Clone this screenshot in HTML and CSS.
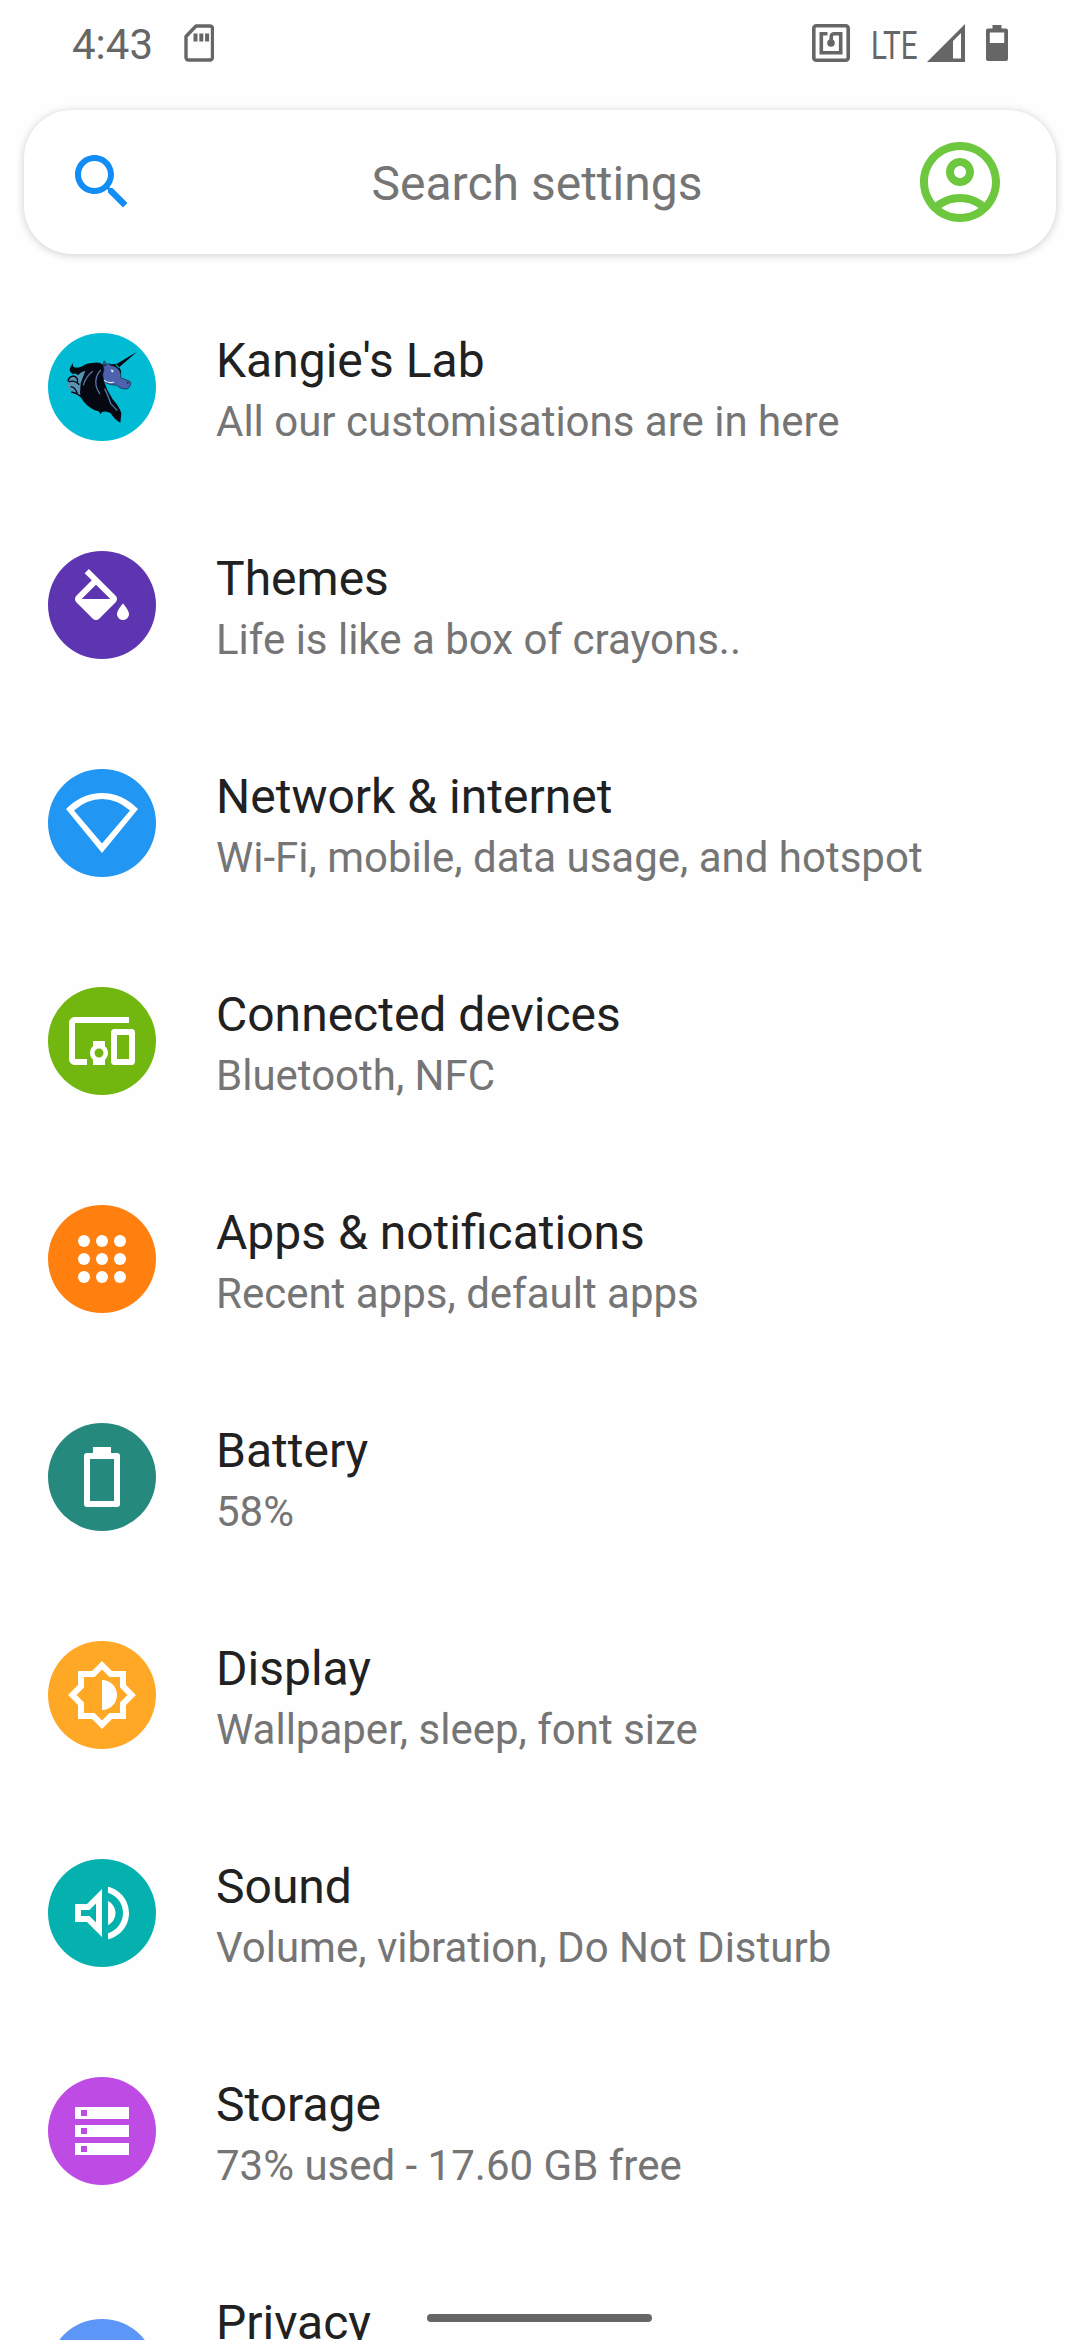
FILE: index.html
```html
<!DOCTYPE html>
<html lang="en">
<head>
<meta charset="utf-8">
<title>Settings</title>
<link rel="stylesheet" href="styles.css">
</head>
<body>
<header class="status">
  <span class="clock">4:43</span>
  <svg class="sd" viewBox="0 0 30 38"><path d="M12 2H26a2.500 2.500 0 0 1 2.500 2.500V33.500a2.500 2.500 0 0 1-2.500 2.500H4.500a2.500 2.500 0 0 1-2.500-2.500V12.500Z" fill="none" stroke="#666" stroke-width="3.400" stroke-linejoin="round"/><path d="M9.500 9.500h4v8h-4zm5.800 0h4v8h-4zm5.800 0h4v8h-4z" fill="#666"/></svg>
  <span class="spacer"></span>
  <svg class="nfc" viewBox="0 0 38 38"><rect x="1.800" y="1.800" width="34.400" height="34.400" rx="2.500" fill="none" stroke="#666" stroke-width="3.600"/><path d="M15.500 9.800H9.300V28.700H28.700V9.800H22.500Q19.200 9.800 19.200 13V19" fill="none" stroke="#666" stroke-width="3.600"/><circle cx="19" cy="19" r="3.800" fill="#666"/></svg>
  <span class="lte">LTE</span>
  <svg class="signal" viewBox="0 0 38 38"><path fill-rule="evenodd" d="M0 38L38 0V38ZM26 34.500H34V9L26 17Z" fill="#666"/></svg>
  <svg class="battery" viewBox="0 0 22 36"><path fill-rule="evenodd" d="M6.500 0h9v3.500H20a2 2 0 0 1 2 2V34a2 2 0 0 1-2 2H2a2 2 0 0 1-2-2V5.500a2 2 0 0 1 2-2H6.500ZM3.800 7.500V18H18.200V7.500Z" fill="#666"/></svg>
</header>

<div class="search">
  <svg class="glass" viewBox="0 0 24 24"><path fill="#118df5" d="M15.500 14h-.79l-.28-.27C15.410 12.590 16 11.110 16 9.500 16 5.910 13.090 3 9.500 3S3 5.910 3 9.500 5.910 16 9.500 16c1.610 0 3.090-.59 4.230-1.570l.27.28v.79l5 4.990L20.490 19l-4.990-5zm-6 0C7.010 14 5 11.990 5 9.500S7.010 5 9.500 5 14 7.010 14 9.500 11.990 14 9.500 14z"/></svg>
  <span class="hint">Search settings</span>
  <svg class="avatar" viewBox="0 0 24 24"><path fill="#6dc840" d="M12 2C6.480 2 2 6.480 2 12s4.480 10 10 10 10-4.480 10-10S17.520 2 12 2zM7.350 18.500C8.660 17.560 10.260 17 12 17s3.340.56 4.650 1.500C15.340 19.440 13.740 20 12 20s-3.340-.56-4.650-1.500zm10.790-1.380C16.450 15.800 14.320 15 12 15s-4.450.8-6.140 2.120C4.700 15.730 4 13.950 4 12c0-4.420 3.580-8 8-8s8 3.580 8 8c0 1.950-.7 3.730-1.860 5.120zM12 6c-1.930 0-3.500 1.570-3.500 3.500S10.070 13 12 13s3.500-1.570 3.500-3.500S13.930 6 12 6zm0 5c-.83 0-1.500-.67-1.500-1.500S11.170 8 12 8s1.500.67 1.500 1.500S12.830 11 12 11z"/></svg>
</div>

<main class="list">
  <div class="row">
    <div class="disc cyan"><svg class="full" viewBox="-36 -21 324 324">
      <path fill="#5795b5" d="M60 88Q72 78 88 80L74 110 62 140 72 172Q50 172 34 156 20 140 22 126L30 108 52 106Z"/>
      <path fill="#050810" d="M231 35L166 74 175 84ZM40 67Q36 76 42 82 52 84 64 80 78 70 98 69 116 64 130 74L166 72Q182 82 184 98L132 124Q140 152 158 178 178 200 184 220L181 248Q164 240 152 220 138 212 126 216L122 223 116 214Q92 208 74 188 62 176 60 160L62 130 76 92Q58 98 54 106 46 98 38 102 26 94 30 84Z"/>
      <path fill="none" stroke="#050810" stroke-width="4" d="M24 124Q26 110 40 108 56 112 52 128M26 126Q42 118 58 134M32 140Q44 140 52 160M34 156Q52 158 72 178"/>
      <path fill="#4c62ad" stroke="#050810" stroke-width="1.500" d="M132 62Q137 66 140 74L148 70 151 76 162 78Q176 84 181 96L183 114 210 124Q216 132 209 138 208 148 194 147 180 146 170 136L154 134Q138 132 132 122 124 104 132 90 127 74 132 62Z"/>
      <path fill="none" stroke="#5475aa" stroke-width="4" d="M122 90Q104 110 108 136 112 152 120 162M134 146Q144 166 152 190L172 212M70 136Q76 112 98 94"/>
      <path fill="none" stroke="#e4f4fb" stroke-width="3.500" d="M132 120Q142 132 162 126"/>
      <path fill="#e4f4fb" d="M152 88L162 92 156 98Z"/>
      <path fill="#162048" d="M199 126h8l-3 7zM134 68l4 9-5 4z"/>
    </svg></div>
    <div class="text"><div class="title">Kangie's Lab</div><div class="sub">All our customisations are in here</div></div>
  </div>
  <div class="row">
    <div class="disc purple"><svg class="icon" viewBox="0 0 24 24"><path d="M16.560 8.940L7.620 0 6.210 1.410l2.380 2.380-5.150 5.150c-.59.59-.59 1.540 0 2.120l5.500 5.500c.29.29.68.44 1.060.44s.77-.15 1.060-.44l5.500-5.500c.59-.58.59-1.530 0-2.120zM5.210 10L10 5.210 14.790 10H5.210zM19 11.500s-2 2.170-2 3.500c0 1.100.9 2 2 2s2-.9 2-2c0-1.330-2-3.500-2-3.500z"/></svg></div>
    <div class="text"><div class="title">Themes</div><div class="sub">Life is like a box of crayons..</div></div>
  </div>
  <div class="row">
    <div class="disc blue"><svg class="icon" viewBox="0 0 72 72"><path fill-rule="evenodd" d="M0 22Q16 6 36 6T72 22L36 66ZM8 23.500L36 56.500 64 23.500Q51 12 36 12T8 23.500Z"/></svg></div>
    <div class="text"><div class="title">Network &amp; internet</div><div class="sub">Wi-Fi, mobile, data usage, and hotspot</div></div>
  </div>
  <div class="row">
    <div class="disc green"><svg class="icon" viewBox="0 0 24 24"><path d="M3 6h18V4H3c-1.100 0-2 .9-2 2v12c0 1.100.9 2 2 2h4v-2H3V6zm10 6H9v1.780c-.61.55-1 1.330-1 2.220s.39 1.670 1 2.220V20h4v-1.780c.61-.55 1-1.340 1-2.220s-.39-1.670-1-2.220V12zm-2 5.500c-.83 0-1.500-.67-1.500-1.500s.67-1.500 1.500-1.500 1.500.67 1.500 1.500-.67 1.500-1.500 1.500zM22 8h-6c-.5 0-1 .5-1 1v10c0 .5.5 1 1 1h6c.5 0 1-.5 1-1V9c0-.5-.5-1-1-1zm-1 10h-4v-8h4v8z"/></svg></div>
    <div class="text"><div class="title">Connected devices</div><div class="sub">Bluetooth, NFC</div></div>
  </div>
  <div class="row">
    <div class="disc orange"><svg class="icon" viewBox="0 0 24 24"><circle cx="6" cy="6" r="2"/><circle cx="12" cy="6" r="2"/><circle cx="18" cy="6" r="2"/><circle cx="6" cy="12" r="2"/><circle cx="12" cy="12" r="2"/><circle cx="18" cy="12" r="2"/><circle cx="6" cy="18" r="2"/><circle cx="12" cy="18" r="2"/><circle cx="18" cy="18" r="2"/></svg></div>
    <div class="text"><div class="title">Apps &amp; notifications</div><div class="sub">Recent apps, default apps</div></div>
  </div>
  <div class="row">
    <div class="disc teal"><svg class="icon" viewBox="0 0 24 24"><path fill-rule="evenodd" d="M9 2h6v2h2a1 1 0 0 1 1 1v16a1 1 0 0 1-1 1H7a1 1 0 0 1-1-1V5a1 1 0 0 1 1-1h2zM8 6v14h8V6z"/></svg></div>
    <div class="text"><div class="title">Battery</div><div class="sub">58%</div></div>
  </div>
  <div class="row">
    <div class="disc amber"><svg class="icon" viewBox="0 0 24 24"><path fill-rule="evenodd" d="M20 15.310L23.310 12 20 8.690V4h-4.690L12 .69 8.690 4H4v4.690L.69 12 4 15.310V20h4.690L12 23.310 15.310 20H20zM18 14.480V18h-3.520L12 20.480 9.520 18H6v-3.520L3.520 12 6 9.520V6h3.520L12 3.520 14.480 6H18v3.520L20.480 12z"/><path d="M12 17V7c2.760 0 5 2.240 5 5s-2.240 5-5 5z"/></svg></div>
    <div class="text"><div class="title">Display</div><div class="sub">Wallpaper, sleep, font size</div></div>
  </div>
  <div class="row">
    <div class="disc aqua"><svg class="icon" viewBox="0 0 24 24"><path d="M3 9v6h4l5 5V4L7 9H3zm7-.17v6.340L7.830 13H5v-2h2.830L10 8.830zM16.500 12c0-1.770-1.020-3.290-2.500-4.030v8.050c1.480-.73 2.500-2.250 2.500-4.020zM14 3.230v2.060c2.890.86 5 3.540 5 6.710s-2.110 5.850-5 6.710v2.060c4.010-.91 7-4.490 7-8.770s-2.990-7.860-7-8.770z"/></svg></div>
    <div class="text"><div class="title">Sound</div><div class="sub">Volume, vibration, Do Not Disturb</div></div>
  </div>
  <div class="row">
    <div class="disc violet"><svg class="icon" viewBox="0 0 24 24"><path fill-rule="evenodd" d="M3 4h18v4H3zM5 5h2v2H5zM3 10h18v4H3zM5 11h2v2H5zM3 16h18v4H3zM5 17h2v2H5z"/></svg></div>
    <div class="text"><div class="title">Storage</div><div class="sub">73% used - 17.60 GB free</div></div>
  </div>
  <div class="row last">
    <div class="disc sky"></div>
    <div class="text"><div class="title">Privacy</div></div>
  </div>
</main>
<div class="navbar"></div>
</body>
</html>
```

FILE: styles.css
```css
* { box-sizing: border-box; }
body {
  margin: 0;
  width: 1080px;
  height: 2340px;
  overflow: hidden;
  position: relative;
  background: #fefefe;
  color: #212121;
  font-family: Roboto, sans-serif;
}
svg { display: block; flex: none; }

.status {
  display: flex;
  align-items: flex-start;
  height: 110px;
  padding: 24px 72px 0 72px;
  color: #666;
}
.clock { width: 112px; font-size: 42px; line-height: 42px; }
.sd { width: 30px; height: 38px; }
.spacer { flex: 1; }
.nfc { width: 38px; height: 38px; margin-right: 21px; }
.lte {
  width: 56px;
  font-size: 38px;
  line-height: 45px;
  transform: scaleX(.78);
  transform-origin: left;
  white-space: nowrap;
}
.signal { width: 38px; height: 38px; margin-right: 21px; }
.battery { width: 22px; height: 36px; margin-top: 1px; }

.search {
  display: flex;
  align-items: center;
  height: 144px;
  margin: 0 24px;
  padding: 0 48px 0 42px;
  border-radius: 48px;
  background: #fff;
  box-shadow: 0 1px 8px rgba(0, 0, 0, .2);
}
.glass { width: 72px; height: 72px; }
.hint {
  flex: 1;
  padding-left: 24px;
  text-align: center;
  font-size: 48px;
  line-height: 56px;
  color: #757575;
  margin-top: 3px;
}
.avatar { width: 96px; height: 96px; }

.list { padding-top: 24px; }
.row {
  display: flex;
  align-items: center;
  height: 218px;
  padding-left: 48px;
}
.text { padding-top: 4px; }
.row.last { align-items: flex-start; height: 100px; }
.row.last .disc { margin-top: 79px; }
.row.last .text { margin-top: 51px; }
.disc {
  display: flex;
  align-items: center;
  justify-content: center;
  flex: none;
  width: 108px;
  height: 108px;
  margin-right: 60px;
  border-radius: 50%;
}
.icon { width: 72px; height: 72px; fill: #fff; }
.full { width: 108px; height: 108px; }
.cyan { background: #00bbd3; }
.purple { background: #5e35b1; }
.blue { background: #2196f3; }
.green { background: #72b70f; }
.orange { background: #ff7f0f; }
.teal { background: #26897e; }
.amber { background: #ffa826; }
.aqua { background: #05b1ae; }
.violet { background: #be4ce4; }
.sky { background: #5c96f7; }
.title { font-size: 48px; line-height: 56px; white-space: nowrap; }
.sub { margin-top: 8px; font-size: 42px; line-height: 49px; color: #757575; white-space: nowrap; }

.navbar {
  position: absolute;
  left: 427px;
  top: 2314px;
  width: 225px;
  height: 8px;
  border-radius: 4px;
  background: #666;
}
```
